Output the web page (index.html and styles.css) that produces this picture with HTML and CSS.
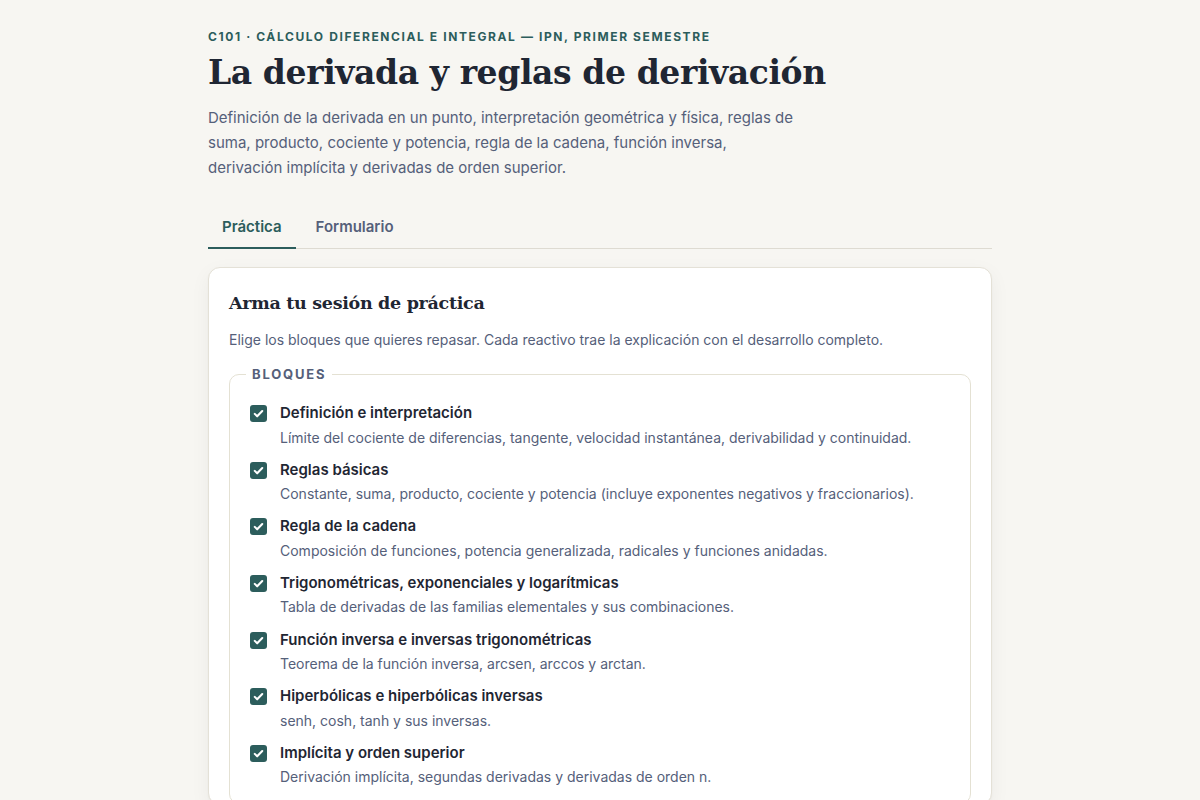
FILE: index.html
```html
<!DOCTYPE html>
<html lang="es">
<head>
<meta charset="utf-8">
<title>La derivada y reglas de derivación</title>
<link rel="stylesheet" href="styles.css">
</head>
<body>
<main class="page">
  <p class="eyebrow">C101 · Cálculo diferencial e integral — IPN, primer semestre</p>
  <h1 class="title">La derivada y reglas de derivación</h1>
  <p class="lead">Definición de la derivada en un punto, interpretación geométrica y física, reglas de suma, producto, cociente y potencia, regla de la cadena, función inversa, derivación implícita y derivadas de orden superior.</p>

  <nav class="tabs">
    <span class="tab tab-active">Práctica</span>
    <span class="tab">Formulario</span>
  </nav>

  <section class="card">
    <h2 class="card-title">Arma tu sesión de práctica</h2>
    <p class="card-sub">Elige los bloques que quieres repasar. Cada reactivo trae la explicación con el desarrollo completo.</p>

    <fieldset class="blocks">
      <legend class="blocks-legend">Bloques</legend>
      <div class="item">
        <span class="check"><svg viewBox="0 0 16 16"><path d="M4 8.4l2.6 2.6L12 5.4"/></svg></span>
        <div class="item-text">
          <div class="item-title">Definición e interpretación</div>
          <div class="item-desc">Límite del cociente de diferencias, tangente, velocidad instantánea, derivabilidad y continuidad.</div>
        </div>
      </div>
      <div class="item">
        <span class="check"><svg viewBox="0 0 16 16"><path d="M4 8.4l2.6 2.6L12 5.4"/></svg></span>
        <div class="item-text">
          <div class="item-title">Reglas básicas</div>
          <div class="item-desc">Constante, suma, producto, cociente y potencia (incluye exponentes negativos y fraccionarios).</div>
        </div>
      </div>
      <div class="item">
        <span class="check"><svg viewBox="0 0 16 16"><path d="M4 8.4l2.6 2.6L12 5.4"/></svg></span>
        <div class="item-text">
          <div class="item-title">Regla de la cadena</div>
          <div class="item-desc">Composición de funciones, potencia generalizada, radicales y funciones anidadas.</div>
        </div>
      </div>
      <div class="item">
        <span class="check"><svg viewBox="0 0 16 16"><path d="M4 8.4l2.6 2.6L12 5.4"/></svg></span>
        <div class="item-text">
          <div class="item-title">Trigonométricas, exponenciales y logarítmicas</div>
          <div class="item-desc">Tabla de derivadas de las familias elementales y sus combinaciones.</div>
        </div>
      </div>
      <div class="item">
        <span class="check"><svg viewBox="0 0 16 16"><path d="M4 8.4l2.6 2.6L12 5.4"/></svg></span>
        <div class="item-text">
          <div class="item-title">Función inversa e inversas trigonométricas</div>
          <div class="item-desc">Teorema de la función inversa, arcsen, arccos y arctan.</div>
        </div>
      </div>
      <div class="item">
        <span class="check"><svg viewBox="0 0 16 16"><path d="M4 8.4l2.6 2.6L12 5.4"/></svg></span>
        <div class="item-text">
          <div class="item-title">Hiperbólicas e hiperbólicas inversas</div>
          <div class="item-desc">senh, cosh, tanh y sus inversas.</div>
        </div>
      </div>
      <div class="item">
        <span class="check"><svg viewBox="0 0 16 16"><path d="M4 8.4l2.6 2.6L12 5.4"/></svg></span>
        <div class="item-text">
          <div class="item-title">Implícita y orden superior</div>
          <div class="item-desc">Derivación implícita, segundas derivadas y derivadas de orden n.</div>
        </div>
      </div>
    </fieldset>
  </section>
</main>
</body>
</html>
```

FILE: styles.css
```css
* { box-sizing: border-box; }

html, body {
  margin: 0;
  padding: 0;
  background: #f7f6f2;
}

body {
  font-family: Inter, "Noto Sans", sans-serif;
  color: #1f2633;
}

.page {
  width: 784px;
  margin: 0 auto;
  padding-top: 29px;
}

.eyebrow {
  margin: 0;
  font-size: 12px;
  line-height: 16px;
  font-weight: 700;
  letter-spacing: 1.6px;
  text-transform: uppercase;
  color: #2c5d5c;
}

.title {
  margin: 6px 0 0;
  font-family: "DejaVu Serif", Georgia, serif;
  font-size: 33px;
  line-height: 44px;
  font-weight: 700;
  color: #1f2633;
  letter-spacing: -0.4px;
}

.lead {
  margin: 10px 0 0;
  max-width: 590px;
  font-size: 15px;
  line-height: 25px;
  color: #55607a;
}

.tabs {
  display: flex;
  gap: 6px;
  margin-top: 24px;
  border-bottom: 1px solid #dedbd2;
}

.tab {
  padding: 13px 14px 10px;
  font-size: 15px;
  line-height: 20px;
  font-weight: 600;
  color: #55607a;
  border-bottom: 2px solid transparent;
  margin-bottom: -1px;
}

.tab-active {
  color: #2c5d5c;
  border-bottom-color: #2c5d5c;
}

.card {
  margin-top: 18px;
  background: #ffffff;
  border: 1px solid #e4e1d7;
  border-radius: 12px;
  padding: 21px 20px 0;
  box-shadow: 0 1px 2px rgba(40, 40, 30, 0.04), 0 6px 20px rgba(40, 40, 30, 0.05);
}

.card-title {
  margin: 0;
  font-family: "DejaVu Serif", Georgia, serif;
  font-size: 17.5px;
  line-height: 28px;
  font-weight: 700;
  color: #1f2633;
  letter-spacing: -0.3px;
}

.card-sub {
  margin: 12px 0 0;
  font-size: 14px;
  line-height: 21px;
  color: #55607a;
}

.blocks {
  margin: 15px 0 0;
  padding: 18px 20px 16px;
  border: 1px solid #e4e1d3;
  border-radius: 10px;
  display: flex;
  flex-direction: column;
  gap: 11.17px;
}

.blocks-legend {
  margin-left: -4px;
  padding: 0 6px;
  font-size: 13px;
  line-height: 19px;
  font-weight: 700;
  letter-spacing: 1.8px;
  text-transform: uppercase;
  color: #55607a;
}

.item {
  display: flex;
  align-items: flex-start;
  gap: 13px;
}

.check {
  flex: none;
  width: 17px;
  height: 17px;
  margin-top: 3px;
  border-radius: 3px;
  background: #2c5d5c;
  display: flex;
  align-items: center;
  justify-content: center;
}

.check svg {
  width: 15px;
  height: 15px;
  fill: none;
  stroke: #ffffff;
  stroke-width: 2.2;
  stroke-linecap: round;
  stroke-linejoin: round;
}

.item-title {
  font-size: 15px;
  line-height: 22.5px;
  font-weight: 600;
  color: #1f2633;
}

.item-desc {
  margin-top: 2px;
  font-size: 14px;
  line-height: 21px;
  color: #55607a;
}
```
